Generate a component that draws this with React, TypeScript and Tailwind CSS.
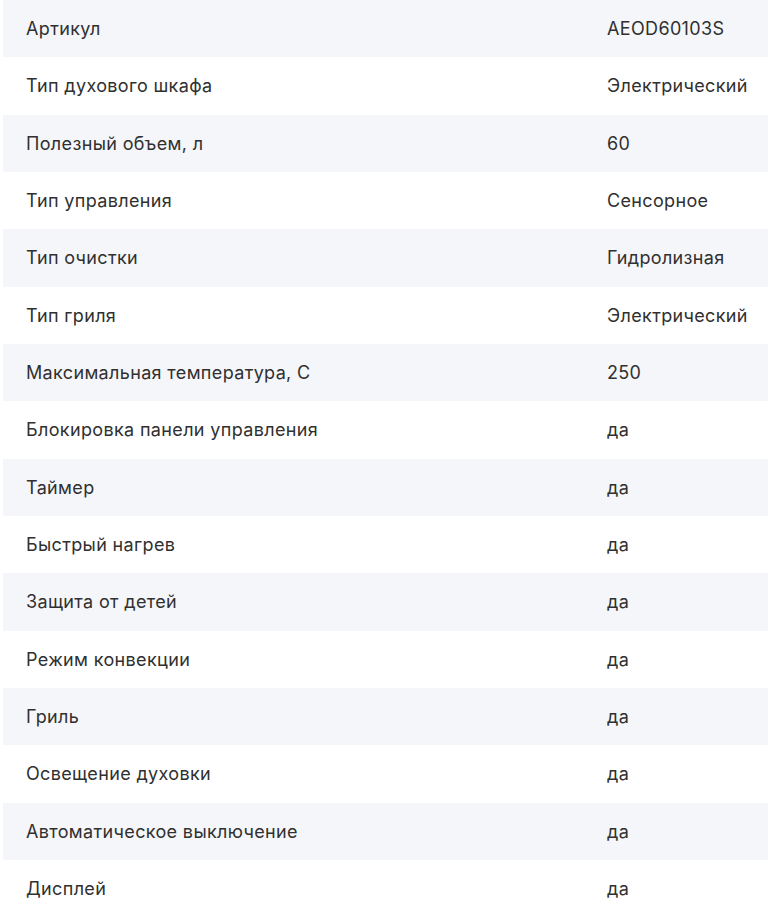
const specs = [
  { name: "Артикул", value: "AEOD60103S" },
  { name: "Тип духового шкафа", value: "Электрический" },
  { name: "Полезный объем, л", value: "60" },
  { name: "Тип управления", value: "Сенсорное" },
  { name: "Тип очистки", value: "Гидролизная" },
  { name: "Тип гриля", value: "Электрический" },
  { name: "Максимальная температура, С", value: "250" },
  { name: "Блокировка панели управления", value: "да" },
  { name: "Таймер", value: "да" },
  { name: "Быстрый нагрев", value: "да" },
  { name: "Защита от детей", value: "да" },
  { name: "Режим конвекции", value: "да" },
  { name: "Гриль", value: "да" },
  { name: "Освещение духовки", value: "да" },
  { name: "Автоматическое выключение", value: "да" },
  { name: "Дисплей", value: "да" },
];

const App = () => {
  return (
    <div className="bg-white min-h-screen pl-[3px] font-['Inter',sans-serif] text-[18px] tracking-[0.35px] text-[#303030]">
      {specs.map((row, i) => (
        <div
          key={row.name}
          className={
            "flex items-center h-[57.33px] pl-[23px] " +
            (i % 2 === 0 ? "bg-[#f5f6fa]" : "bg-white")
          }
        >
          <div className="w-[581px] shrink-0">{row.name}</div>
          <div>{row.value}</div>
        </div>
      ))}
    </div>
  );
};

export default App;
